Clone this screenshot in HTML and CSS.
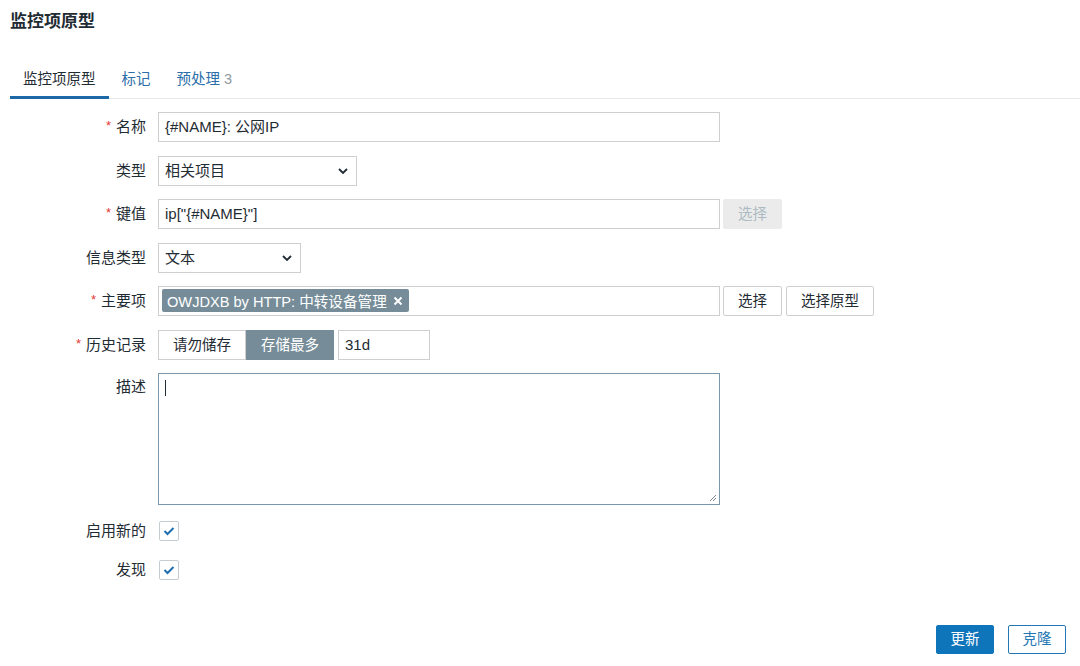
FILE: index.html
```html
<!DOCTYPE html>
<html lang="zh">
<head>
<meta charset="utf-8">
<title>监控项原型</title>
<link rel="stylesheet" href="styles.css">
</head>
<body>
<div class="page">
  <h1 class="title">监控项原型</h1>
  <div class="tabs">
    <div class="tab active">监控项原型</div>
    <div class="tab">标记</div>
    <div class="tab">预处理 <span class="count">3</span></div>
  </div>
  <div class="form">
    <div class="label req">名称</div>
    <div class="field"><div class="input w-wide">{#NAME}: 公网IP</div></div>

    <div class="label">类型</div>
    <div class="field"><div class="select w-type"><span>相关项目</span><svg class="chev" viewBox="0 0 10 6"><path d="M1 1l4 4 4-4"/></svg></div></div>

    <div class="label req">键值</div>
    <div class="field"><div class="input w-wide">ip["{#NAME}"]</div><div class="btn btn-disabled w-sel">选择</div></div>

    <div class="label">信息类型</div>
    <div class="field"><div class="select w-info"><span>文本</span><svg class="chev" viewBox="0 0 10 6"><path d="M1 1l4 4 4-4"/></svg></div></div>

    <div class="label req">主要项</div>
    <div class="field"><div class="multi w-wide"><span class="tag">OWJDXB by HTTP: 中转设备管理<svg class="x" viewBox="0 0 10 10"><path d="M1.5 1.5l7 7M8.5 1.5l-7 7"/></svg></span></div><div class="btn btn-grey w-sel">选择</div><div class="btn btn-grey w-proto">选择原型</div></div>

    <div class="label req">历史记录</div>
    <div class="field"><div class="radio"><span class="opt">请勿储存</span><span class="opt on">存储最多</span></div><div class="input w-hist">31d</div></div>

    <div class="label top">描述</div>
    <div class="field"><div class="textarea w-wide"><span class="caret"></span><svg class="grip" viewBox="0 0 10 10"><path d="M9 3L3 9M9 6L6 9"/></svg></div></div>

    <div class="label">启用新的</div>
    <div class="field cbrow"><div class="cb"><svg viewBox="0 0 12 10"><path d="M1.5 5l3 3 6-6"/></svg></div></div>

    <div class="label">发现</div>
    <div class="field cbrow"><div class="cb"><svg viewBox="0 0 12 10"><path d="M1.5 5l3 3 6-6"/></svg></div></div>
  </div>
  <div class="footer">
    <div class="btn btn-primary">更新</div>
    <div class="btn btn-alt">克隆</div>
    <div class="btn btn-alt btn-edge"></div>
  </div>
</div>
</body>
</html>
```
FILE: styles.css
```css
html, body {
  margin: 0;
  padding: 0;
  background: #ffffff;
  overflow: hidden;
}
body {
  width: 1080px;
  height: 666px;
  font-family: "Liberation Sans", Arial, "Noto Sans CJK SC", sans-serif;
  font-size: 14.5px;
  color: #1f2c33;
}
.page {
  padding-top: 11px;
}
.title {
  margin: 0 0 0 10px;
  font-size: 17px;
  font-weight: bold;
  line-height: 22px;
  color: #1f2c33;
}
.tabs {
  margin: 30px 0 0 10px;
  display: flex;
  border-bottom: 1px solid #e6e9eb;
  height: 36px;
  box-sizing: border-box;
}
.tab {
  padding: 0 13px;
  font-size: 14.5px;
  line-height: 32px;
  color: #2b6ea8;
  border-bottom: 3px solid transparent;
  margin-bottom: -1px;
}
.tab.active {
  color: #1f2c33;
  border-bottom-color: #1d68a7;
}
.tab + .tab { margin-left: 0; }
.tab .count { color: #8f9aa1; }
.form {
  margin-top: 13px;
  display: grid;
  grid-template-columns: 146px 1fr;
  column-gap: 12px;
  row-gap: 13.5px;
}
.label {
  text-align: right;
  line-height: 30px;
  height: 30px;
  font-size: 15px;
  color: #1f2c33;
  white-space: nowrap;
}
.label.top { line-height: 28px; }
.label.req::before {
  content: "*";
  color: #e33734;
  margin-right: 5px;
  font-size: 13px;
  position: relative;
  top: -2px;
}
.field {
  display: flex;
  gap: 4px;
  align-items: flex-start;
}
.input, .select, .multi, .textarea {
  box-sizing: border-box;
  border: 1px solid #cfcfcf;
  background: #fff;
  height: 30px;
  line-height: 28px;
  padding: 0 6px;
  font-size: 15px;
  color: #1f2c33;
}
.w-wide { width: 562px; }
.w-type { width: 199px; }
.w-info { width: 143px; }
.w-hist { width: 92px; }
.select {
  display: flex;
  justify-content: space-between;
  align-items: center;
  padding-right: 8px;
}
.chev {
  width: 10px;
  height: 6px;
  fill: none;
  stroke: #1f2c33;
  stroke-width: 1.8;
}
.multi {
  padding: 2px 3px;
  line-height: normal;
}
.tag {
  display: inline-flex;
  align-items: center;
  height: 23px;
  background: #768d99;
  color: #ffffff;
  padding: 0 6px 0 5px;
  border-radius: 2px;
  font-size: 14.6px;
}
.x {
  width: 10px;
  height: 10px;
  margin-left: 6px;
  fill: none;
  stroke: #ffffff;
  stroke-width: 2;
}
.btn {
  box-sizing: border-box;
  height: 30px;
  line-height: 28px;
  text-align: center;
  border: 1px solid #cfcfcf;
  border-radius: 2px;
  background: #ffffff;
  color: #1f2c33;
}
.w-sel { width: 59px; margin-left: -1px; }
.w-proto { width: 88px; margin-left: 0; }
.btn-disabled {
  background: #ebebeb;
  border-color: #ebebeb;
  color: #acbbc2;
}
.radio {
  display: flex;
  box-sizing: border-box;
  height: 30px;
}
.opt {
  box-sizing: border-box;
  width: 88px;
  height: 30px;
  line-height: 28px;
  text-align: center;
  border: 1px solid #cfcfcf;
  background: #fff;
}
.opt.on {
  background: #768d99;
  border-color: #768d99;
  color: #ffffff;
}
.textarea {
  height: 132px;
  border-color: #7a98ad;
  position: relative;
  padding: 6px 6px;
}
.caret {
  display: block;
  width: 1px;
  height: 16px;
  background: #1f2c33;
}
.grip {
  position: absolute;
  right: 2px;
  bottom: 2px;
  width: 10px;
  height: 10px;
  fill: none;
  stroke: #7a8790;
  stroke-width: 1;
}
.cbrow {
  align-items: center;
  height: 30px;
}
.form .label:nth-last-child(4) { margin-top: -3px; }
.form .field:nth-last-child(3) { margin-top: -3px; }
.form .label:nth-last-child(2) { margin-top: -4px; }
.form .field:nth-last-child(1) { margin-top: -4px; }
.cb {
  box-sizing: border-box;
  width: 20px;
  height: 20px;
  border: 1px solid #c5cdd2;
  border-radius: 2px;
  margin-left: 1px;
  display: flex;
  align-items: center;
  justify-content: center;
  background: #fff;
}
.cb svg {
  width: 12px;
  height: 10px;
  fill: none;
  stroke: #1f6fb0;
  stroke-width: 2;
}
.footer {
  margin-top: 40px;
  padding-left: 936px;
  display: flex;
  gap: 14px;
}
.footer .btn {
  flex: none;
  height: 29px;
  line-height: 27px;
  width: 58px;
  font-size: 14.5px;
}
.btn-primary {
  background: #0f75bb;
  border-color: #0f75bb;
  color: #ffffff;
}
.btn-alt {
  border-color: #2477b5;
  color: #2477b5;
}
.footer .btn-edge {
  border-color: #d5d9dc;
}
```
